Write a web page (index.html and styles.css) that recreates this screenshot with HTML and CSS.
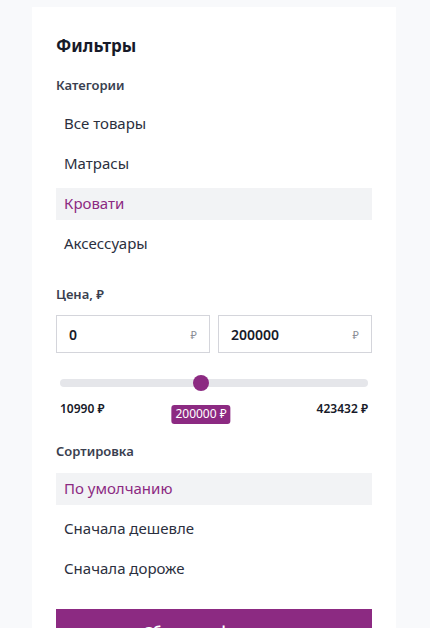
FILE: index.html
```html
<!DOCTYPE html>
<html lang="ru">
<head>
<meta charset="utf-8">
<title>Фильтры</title>
<link rel="stylesheet" href="styles.css">
</head>
<body>
<aside class="card">
  <h2 class="title">Фильтры</h2>

  <div class="label">Категории</div>
  <ul class="list">
    <li class="item">Все товары</li>
    <li class="item">Матрасы</li>
    <li class="item active">Кровати</li>
    <li class="item">Аксессуары</li>
  </ul>

  <div class="label label-price">Цена, ₽</div>
  <div class="inputs">
    <label class="field"><input class="field-input" type="text" value="0"><span class="cur">₽</span></label>
    <label class="field"><input class="field-input" type="text" value="200000"><span class="cur">₽</span></label>
  </div>

  <div class="slider">
    <div class="track">
      <span class="thumb" style="left: 45.8%"></span>
    </div>
    <div class="range-labels">
      <span>10990 ₽</span>
      <span class="badge" style="left: 45.8%">200000 ₽</span>
      <span>423432 ₽</span>
    </div>
  </div>

  <div class="label label-sort">Сортировка</div>
  <ul class="list list-sort">
    <li class="item active">По умолчанию</li>
    <li class="item">Сначала дешевле</li>
    <li class="item">Сначала дороже</li>
  </ul>

  <button class="reset" type="button">Сбросить фильтры</button>
</aside>
</body>
</html>
```

FILE: styles.css
```css
* { box-sizing: border-box; }

html, body {
  margin: 0;
  background: #f8f9fb;
}

body {
  padding: 7px 34px 40px 32px;
  font-family: "Noto Sans", "Open Sans", sans-serif;
  color: #2b2f3e;
}

.card {
  width: 364px;
  background: #ffffff;
  padding: 24px 24px 24px 24px;
}

.title {
  margin: 0;
  font-size: 17px;
  font-weight: 700;
  line-height: 30px;
  color: #171a29;
}

.label {
  margin-top: 15px;
  font-size: 13px;
  font-weight: 600;
  line-height: 18px;
  color: #3a3f50;
}

.list {
  list-style: none;
  margin: 14px 0 0;
  padding: 0;
  display: flex;
  flex-direction: column;
  gap: 8px;
}

.item {
  height: 32px;
  line-height: 31px;
  padding: 0 8px;
  font-size: 15px;
  color: #2b2f3e;
}

.item.active {
  background: #f2f3f5;
  color: #8c2a82;
}

.label-price { margin-top: 25px; }

.inputs {
  margin-top: 12px;
  display: grid;
  grid-template-columns: minmax(0, 1fr) minmax(0, 1fr);
  gap: 8px;
}

.field {
  height: 38px;
  min-width: 0;
  border: 1px solid #d4d5db;
  display: flex;
  align-items: center;
  padding: 0 12px;
}

.field-input {
  flex: 1 1 0;
  width: 0;
  min-width: 0;
  border: 0;
  outline: 0;
  padding: 0;
  font-family: inherit;
  font-size: 14px;
  font-weight: 600;
  color: #171a29;
  background: transparent;
}

.cur {
  font-size: 11px;
  color: #8a8d96;
}

.slider {
  margin-top: 26px;
  padding: 0 4px;
}

.track {
  position: relative;
  height: 8px;
  border-radius: 4px;
  background: #e5e6ea;
}

.thumb {
  position: absolute;
  top: 50%;
  width: 16px;
  height: 16px;
  border-radius: 50%;
  background: #8c2a82;
  transform: translate(-50%, -50%);
}

.range-labels {
  position: relative;
  margin-top: 14px;
  display: flex;
  justify-content: space-between;
  font-size: 12px;
  font-weight: 600;
  line-height: 16px;
  color: #171a29;
}

.badge {
  position: absolute;
  top: 4px;
  transform: translateX(-50%);
  background: #8c2a82;
  color: #ffffff;
  font-weight: 400;
  padding: 1px 4px 2px;
  border-radius: 3px;
  white-space: nowrap;
}

.label-sort { margin-top: 25px; }

.list-sort { margin-top: 13px; }

.reset {
  display: block;
  width: 100%;
  margin-top: 24px;
  height: 44px;
  border: 0;
  background: #8c2a82;
  color: #ffffff;
  font-family: inherit;
  font-size: 15px;
  font-weight: 600;
}
```
